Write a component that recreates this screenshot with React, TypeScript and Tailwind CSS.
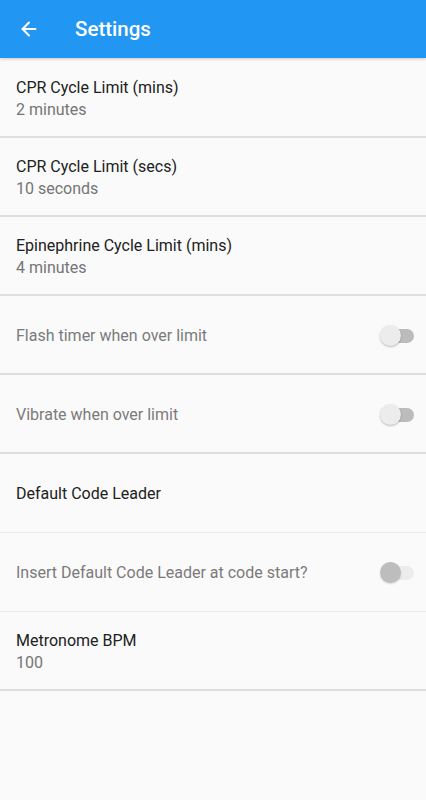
import { ArrowLeft } from "lucide-react";

type Row = {
  title: string;
  summary?: string;
  toggle?: "off" | "disabled";
  muted?: boolean;
  light?: boolean;
};

const rows: Row[] = [
  { title: "CPR Cycle Limit (mins)", summary: "2 minutes" },
  { title: "CPR Cycle Limit (secs)", summary: "10 seconds" },
  { title: "Epinephrine Cycle Limit (mins)", summary: "4 minutes" },
  { title: "Flash timer when over limit", toggle: "off", muted: true },
  { title: "Vibrate when over limit", toggle: "off", muted: true },
  { title: "Default Code Leader", light: true },
  { title: "Insert Default Code Leader at code start?", toggle: "disabled", muted: true, light: true },
  { title: "Metronome BPM", summary: "100" },
];

function Toggle({ kind }: { kind: "off" | "disabled" }) {
  const off = kind === "off";
  return (
    <div className="relative h-[22px] w-[34px]">
      <div
        className={`absolute left-[4px] top-[4px] h-[14px] w-[30px] rounded-full ${
          off ? "bg-[#bcbcbc]" : "bg-[#ececec]"
        }`}
      />
      <div
        className={`absolute left-0 top-0 h-[21px] w-[21px] rounded-full ${
          off
            ? "bg-[#ececec] shadow-[0_1px_2px_rgba(0,0,0,0.25)]"
            : "bg-[#bdbdbd] shadow-[0_1px_2px_rgba(0,0,0,0.15)]"
        }`}
      />
    </div>
  );
}

export default function App() {
  return (
    <div className="min-h-[800px] w-full bg-[#fafafa] font-['Roboto',sans-serif]">
      {/* APP BAR */}
      <div className="relative flex h-[58px] items-center bg-[#2196f3] text-white shadow-[0_1px_3px_rgba(0,0,0,0.2)]">
        <div className="flex w-[75px] pl-[18px]">
          <ArrowLeft size={22} strokeWidth={2.2} />
        </div>
        <span className="text-[20.5px] font-medium">Settings</span>
      </div>

      {/* PREFERENCES */}
      <div className="pt-[1px]">
        {rows.map((row) => (
          <div
            key={row.title}
            className={`flex h-[79px] items-center justify-between pl-4 pr-[12px] pt-[2px] ${
              row.light
                ? "border-b border-[#ececec]"
                : "border-b-2 border-[#dedede]"
            }`}
          >
            <div className="flex flex-col">
              <span
                className={`text-[16px] leading-[22px] ${
                  row.muted ? "text-[#7a7a7a]" : "text-[#212121]"
                }`}
              >
                {row.title}
              </span>
              {row.summary && (
                <span className="text-[16px] leading-[22px] text-[#757575]">
                  {row.summary}
                </span>
              )}
            </div>
            {row.toggle && <Toggle kind={row.toggle} />}
          </div>
        ))}
      </div>
    </div>
  );
}
